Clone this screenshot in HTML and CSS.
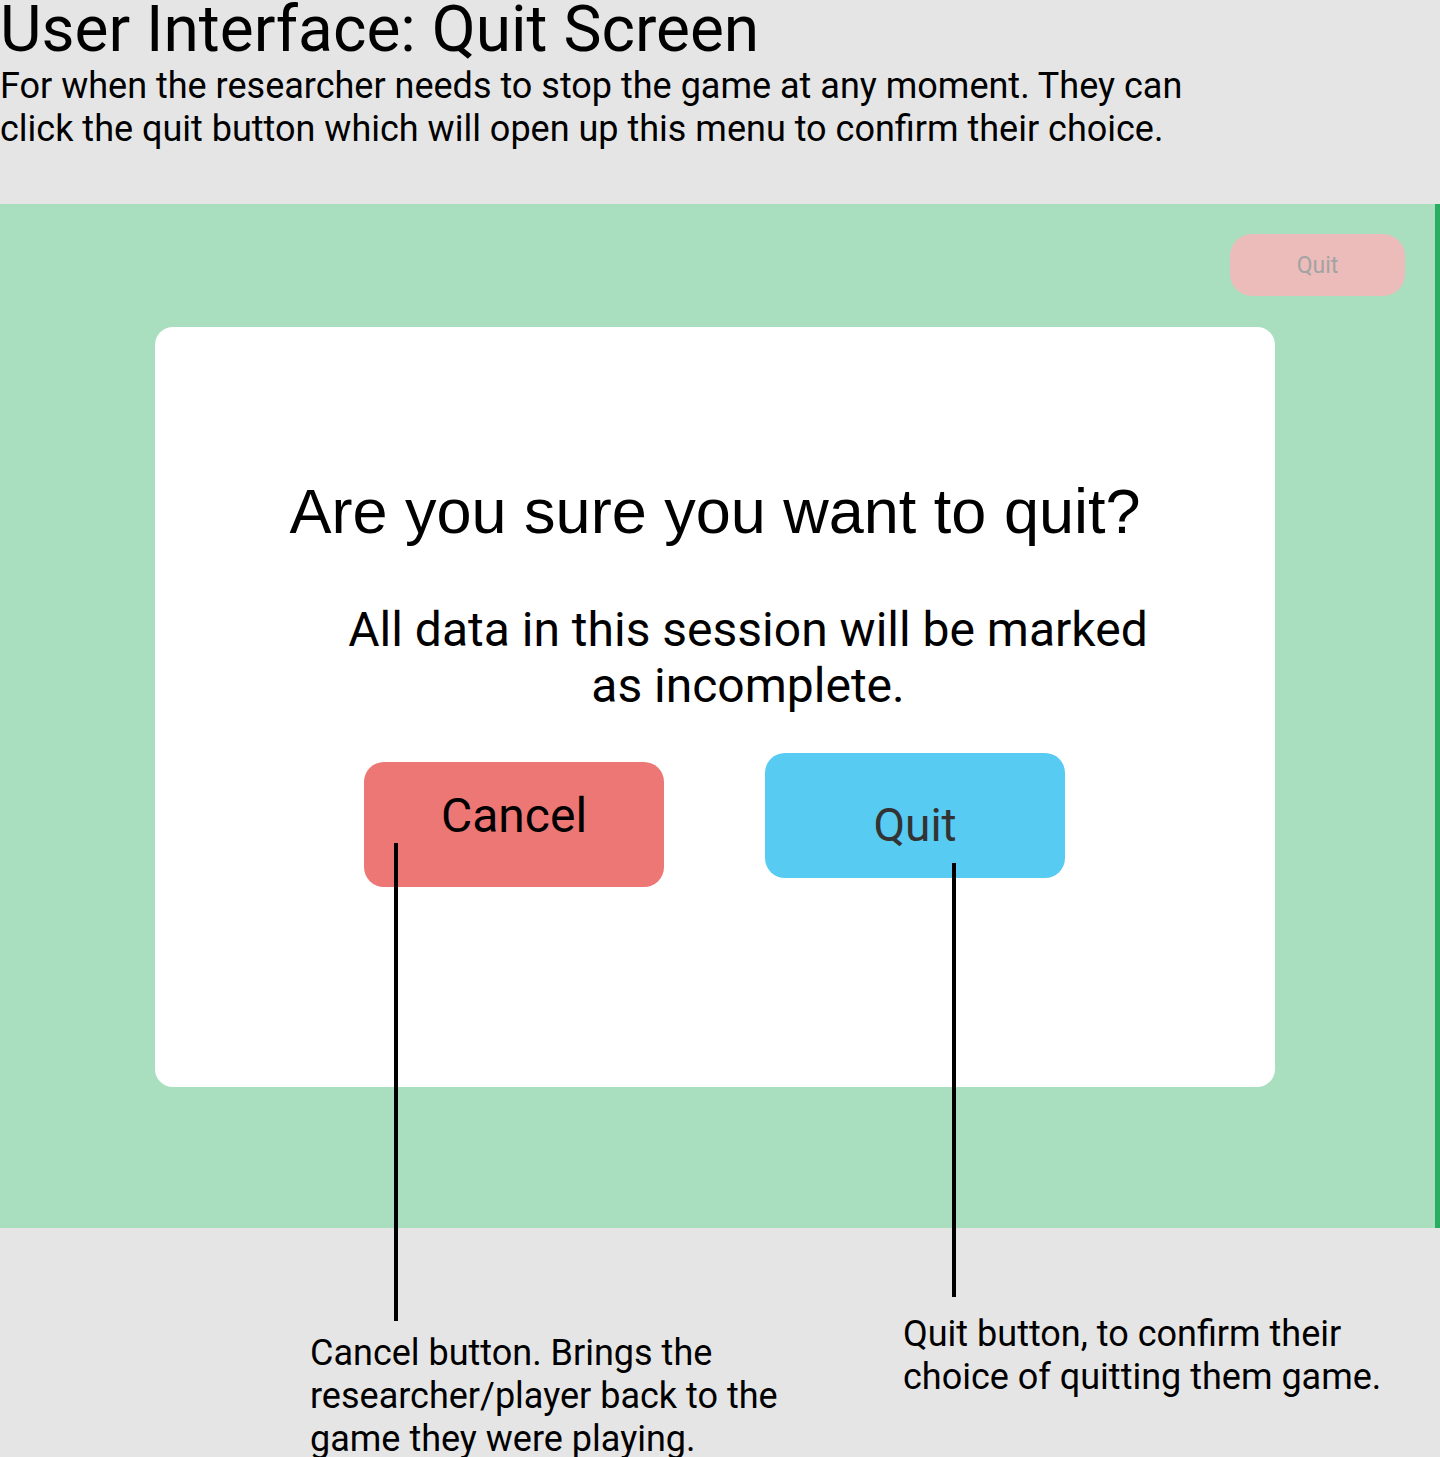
FILE: index.html
```html
<!DOCTYPE html>
<html lang="en">
<head>
<meta charset="utf-8">
<title>User Interface: Quit Screen</title>
<link rel="stylesheet" href="styles.css">
</head>
<body>
<div class="page">
  <header class="intro">
    <h1 class="title">User Interface: Quit Screen</h1>
    <p class="lead">For when the researcher needs to stop the game at any moment. They can<br>click the quit button which will open up this menu to confirm their choice.</p>
  </header>

  <section class="stage">
    <div class="topbar">
      <div class="pill">Quit</div>
    </div>
    <div class="dialog">
      <h2 class="question">Are you sure you want to quit?</h2>
      <p class="warning">All data in this session will be marked<br>as incomplete.</p>
      <div class="actions">
        <div class="btn btn-cancel">Cancel</div>
        <div class="btn btn-quit">Quit</div>
      </div>
    </div>
  </section>

  <footer class="notes">
    <p class="note note-cancel">Cancel button. Brings the<br>researcher/player back to the<br>game they were playing.</p>
    <p class="note note-quit">Quit button, to confirm their<br>choice of quitting them game.</p>
  </footer>

  <span class="leader leader-cancel"></span>
  <span class="leader leader-quit"></span>
</div>
</body>
</html>
```

FILE: styles.css
```css
* { box-sizing: border-box; }

html, body {
  margin: 0;
  padding: 0;
  background: #e5e5e5;
}

body {
  font-family: Roboto, "Noto Sans", "Liberation Sans", sans-serif;
  color: #000;
}

.page {
  position: relative;
  width: 1440px;
  height: 1457px;
  overflow: hidden;
}

.intro {
  height: 204px;
  padding-top: 2px;
}

.title {
  margin: 0;
  font-size: 64px;
  font-weight: 400;
  line-height: 56px;
  white-space: nowrap;
}

.lead {
  margin: 7px 0 0;
  font-size: 36px;
  line-height: 43px;
  white-space: nowrap;
}

.stage {
  height: 1024px;
  background: #a9dfbf;
  border-right: 5px solid #27ae60;
  display: flex;
  flex-direction: column;
}

.topbar {
  display: flex;
  justify-content: flex-end;
  padding: 30px 30px 0 0;
}

.pill {
  width: 175px;
  height: 62px;
  border-radius: 22px;
  background: #ecbcbb;
  color: #a3a3a3;
  font-size: 23px;
  display: flex;
  align-items: center;
  justify-content: center;
  padding-top: 1px;
}

.dialog {
  margin: 31px 0 0 155px;
  width: 1120px;
  height: 760px;
  background: #fff;
  border-radius: 18px;
  padding-top: 150px;
  display: flex;
  flex-direction: column;
}

.question {
  margin: 0;
  font-family: "Liberation Sans", Arial, sans-serif;
  font-weight: 400;
  font-size: 63px;
  line-height: 69px;
  text-align: center;
  white-space: nowrap;
}

.warning {
  margin: 56px 0 0;
  padding-left: 66px;
  font-size: 48px;
  line-height: 56px;
  text-align: center;
}

.actions {
  margin: 39px 0 0 209px;
  display: flex;
  align-items: flex-start;
  gap: 101px;
}

.btn {
  width: 300px;
  height: 125px;
  border-radius: 20px;
  display: flex;
  justify-content: center;
  align-items: flex-start;
}

.btn-cancel {
  margin-top: 9px;
  background: #ec7775;
  color: #000;
  font-size: 48px;
  padding-top: 26px;
  line-height: 56px;
}

.btn-quit {
  background: #57cbf2;
  color: #333;
  font-size: 46px;
  padding-top: 45px;
  line-height: 54px;
}

.notes {
  height: 229px;
  display: flex;
  align-items: flex-start;
}

.note {
  margin: 0;
  font-size: 36px;
  line-height: 43px;
  white-space: nowrap;
}

.note-cancel {
  margin: 104px 0 0 310px;
  width: 593px;
}

.note-quit {
  margin: 85px 0 0 0;
}

.leader {
  position: absolute;
  width: 4px;
  background: #000;
}

.leader-cancel {
  left: 394px;
  top: 843px;
  height: 478px;
}

.leader-quit {
  left: 952px;
  top: 863px;
  height: 434px;
}
```
